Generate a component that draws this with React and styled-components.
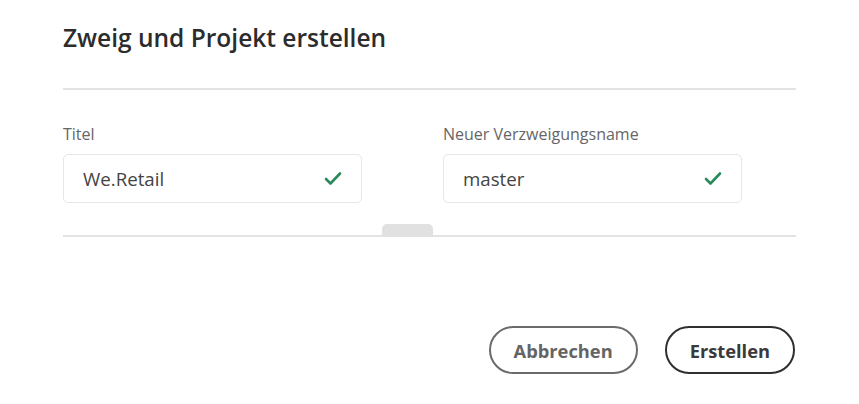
import styled, { createGlobalStyle } from "styled-components";

const Global = createGlobalStyle`
  body {
    margin: 0;
    background: #fff;
    font-family: "Open Sans", "Noto Sans", sans-serif;
  }
`;

const Dialog = styled.div`
  width: 859px;
  height: 404px;
  padding: 0 63px;
  box-sizing: border-box;
  display: flex;
  flex-direction: column;
`;

const Heading = styled.h2`
  margin: 0;
  padding-top: 23px;
  height: 30px;
  font-size: 24.5px;
  line-height: 30px;
  font-weight: 600;
  color: #2c2c2c;
`;

const Divider = styled.div`
  height: 2px;
  background: #e3e3e3;
  margin-top: ${(p) => p.top || 0}px;
`;

const Fields = styled.div`
  display: grid;
  grid-template-columns: 299px 299px;
  column-gap: 81px;
  padding-top: 34px;
`;

const Field = styled.div`
  display: flex;
  flex-direction: column;
`;

const Label = styled.label`
  font-size: 16px;
  line-height: 20px;
  color: #666;
  margin-bottom: 10px;
`;

const Input = styled.div`
  height: 49px;
  box-sizing: border-box;
  border: 1px solid #e6e6e6;
  border-radius: 5px;
  display: flex;
  align-items: center;
  justify-content: space-between;
  padding: 0 19px 0 19px;
  font-size: 18.7px;
  color: #444;
`;

const HandleRow = styled.div`
  position: relative;
  margin-top: 32px;
`;

const Handle = styled.div`
  position: absolute;
  left: 319px;
  top: -11px;
  width: 51px;
  height: 12px;
  background: #e1e1e1;
  border-radius: 5px 5px 0 0;
`;

const Footer = styled.div`
  display: flex;
  justify-content: flex-end;
  gap: 27px;
  padding-top: 89px;
  padding-right: 1px;
`;

const Button = styled.button`
  height: 48px;
  padding: 0 23px;
  border-radius: 24px;
  background: #fff;
  border: 2px solid ${(p) => (p.primary ? "#2f2f2f" : "#6b6b6b")};
  color: ${(p) => (p.primary ? "#3a3a3a" : "#646464")};
  font-family: "Open Sans", "Noto Sans", sans-serif;
  font-size: 18.3px;
  font-weight: 700;
`;

const Check = () => (
  <svg width="18" height="15" viewBox="0 0 18 15">
    <path
      d="M2 8 L6.5 12.5 L16 2.5"
      fill="none"
      stroke="#2b8a5c"
      strokeWidth="2.6"
      strokeLinecap="round"
      strokeLinejoin="round"
    />
  </svg>
);

export default function App() {
  return (
    <>
      <Global />
      <Dialog>
        <Heading>Zweig und Projekt erstellen</Heading>
        <Divider top={35} />
        <Fields>
          <Field>
            <Label>Titel</Label>
            <Input>
              We.Retail
              <Check />
            </Input>
          </Field>
          <Field>
            <Label>Neuer Verzweigungsname</Label>
            <Input>
              master
              <Check />
            </Input>
          </Field>
        </Fields>
        <HandleRow>
          <Handle />
          <Divider />
        </HandleRow>
        <Footer>
          <Button>Abbrechen</Button>
          <Button primary>Erstellen</Button>
        </Footer>
      </Dialog>
    </>
  );
}
